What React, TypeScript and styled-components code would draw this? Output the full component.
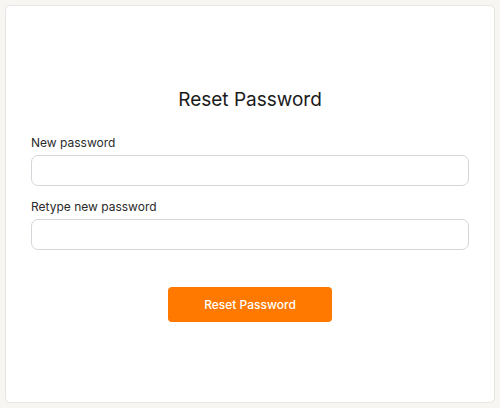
import React from "react";
import styled, { createGlobalStyle } from "styled-components";

const Global = createGlobalStyle`
  html, body { margin: 0; padding: 0; background: #f7f6f3; }
  body { font-family: Inter, "Noto Sans", sans-serif; }
  * { box-sizing: border-box; }
`;

const Page = styled.div`
  width: 500px;
  height: 408px;
  padding: 5px;
  background: #f7f6f3;
`;

const Card = styled.div`
  height: 398px;
  background: #ffffff;
  border: 1px solid #e6e5e2;
  border-radius: 5px;
  padding: 84px 25px 0;
  display: flex;
  flex-direction: column;
`;

const Title = styled.h1`
  margin: 0 0 25px;
  font-size: 19px;
  font-weight: 400;
  color: #1a1a1a;
  text-align: center;
  line-height: 20px;
`;

const Field = styled.label`
  display: flex;
  flex-direction: column;
  gap: 5px;
  margin-bottom: 13px;
`;

const Label = styled.span`
  font-size: 12px;
  color: #2a2a2a;
  line-height: 15px;
`;

const Input = styled.input`
  height: 31px;
  width: 100%;
  border: 1px solid #d3d6da;
  border-radius: 7px;
  background: #fff;
  outline: none;
  font-family: inherit;
  font-size: 13px;
  padding: 0 10px;
`;

const Actions = styled.div`
  display: flex;
  justify-content: center;
  margin-top: 24px;
`;

const Button = styled.button`
  width: 164px;
  height: 35px;
  border: none;
  border-radius: 4px;
  background: #ff7900;
  color: #ffffff;
  font-family: inherit;
  font-size: 12px;
  font-weight: 500;
  cursor: pointer;
`;

export default function App() {
  return (
    <>
      <Global />
      <Page>
        <Card>
          <Title>Reset Password</Title>
          <Field>
            <Label>New password</Label>
            <Input type="password" />
          </Field>
          <Field>
            <Label>Retype new password</Label>
            <Input type="password" />
          </Field>
          <Actions>
            <Button>Reset Password</Button>
          </Actions>
        </Card>
      </Page>
    </>
  );
}
